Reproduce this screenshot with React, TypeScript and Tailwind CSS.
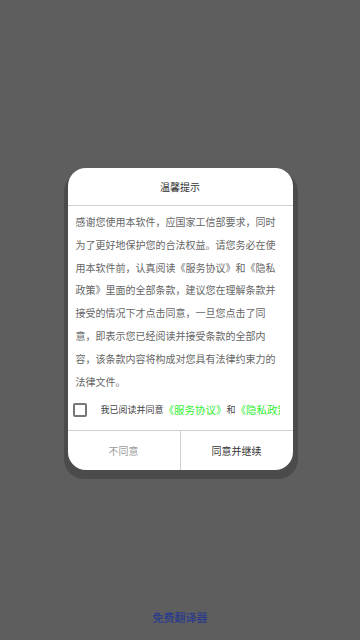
import React from "react";

const font = { fontFamily: '"Noto Sans CJK SC", "Noto Sans", sans-serif' };

function AgreementDialog() {
  return (
    <div className="relative w-[225px]">
      {/* 对话框下方的阴影 */}
      <div className="absolute -left-[4px] -right-[5px] top-[4px] -bottom-[9px] rounded-[20px] bg-[#4b4b4b]" />
      <div className="relative rounded-[18px] bg-white overflow-hidden">
        <div className="h-[37px] flex items-center justify-center text-[10px] text-[#333]">
          温馨提示
        </div>
        <div className="h-px bg-[#cfcfcf]" />
        <p className="px-2 pt-[5px] text-[10px] leading-[22.8px] text-[#666]">
          感谢您使用本软件，应国家工信部要求，同时为了更好地保护您的合法权益。请您务必在使用本软件前，认真阅读《服务协议》和《隐私政策》里面的全部条款，建议您在理解条款并接受的情况下才点击同意，一旦您点击了同意，即表示您已经阅读并接受条款的全部内容，该条款内容将构成对您具有法律约束力的法律文件。
        </p>
        <div className="flex items-center h-[37px] pb-[4px] pl-[5px] pr-[13px]">
          <div className="w-[14px] h-[14px] shrink-0 border-2 border-[#777] rounded-[2px]" />
          <div className="ml-[14px] flex items-center whitespace-nowrap overflow-hidden">
            <span className="text-[9px] text-[#444]">我已阅读并同意</span>
            <span className="text-[10.5px] text-[#33ee33]">《服务协议》</span>
            <span className="text-[9px] text-[#444]">和</span>
            <span className="text-[10.5px] text-[#33ee33]">《隐私政策》</span>
          </div>
        </div>
        <div className="h-px bg-[#cfcfcf]" />
        <div className="flex h-[39px]">
          <button className="flex-1 flex items-center justify-center text-[10px] text-[#9a9a9a]">
            不同意
          </button>
          <div className="w-px bg-[#cfcfcf]" />
          <button className="flex-1 flex items-center justify-center text-[10px] text-[#333]">
            同意并继续
          </button>
        </div>
      </div>
    </div>
  );
}

export default function App() {
  return (
    <div style={font} className="h-[640px] w-full bg-[#5e5e5e] flex flex-col items-center pt-[168px]">
      <AgreementDialog />
      <div className="mt-auto pb-[15px] text-[11px] leading-[16px] font-medium text-[#2a3b8c]">免费翻译器</div>
    </div>
  );
}
